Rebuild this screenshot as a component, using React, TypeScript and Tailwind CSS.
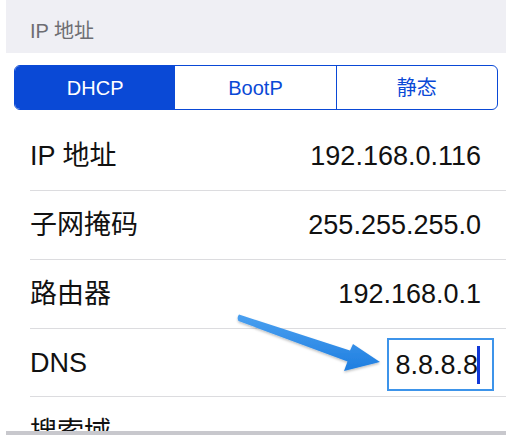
import React from "react";

const font = { fontFamily: '"Liberation Sans", Arial, "Noto Sans CJK SC", sans-serif' };

function Row({ label, value }: { label: string; value: string }) {
  return (
    <div className="ml-[24px] h-[69px] border-b border-[#dcdcdf] flex items-center justify-between pr-[25px]">
      <span className="text-[27px] text-[#111] leading-[30px]">{label}</span>
      <span className="text-[27px] text-[#111] leading-[30px]">{value}</span>
    </div>
  );
}

export default function App() {
  return (
    <div className="w-[519px] h-[436px] overflow-hidden bg-white relative" style={font}>
      <div className="ml-[6px] w-[500px] flex flex-col">
        <div className="h-[53px] bg-[#efeff4] pl-[24px] pt-[19px]">
          <span className="text-[20px] leading-[24px] text-[#6d6d72]">IP 地址</span>
        </div>
        <div className="mt-[12px] mx-[8px] h-[45px] border-[1.5px] border-[#0a49d6] rounded-[6px] flex overflow-hidden">
          <div className="flex-1 bg-[#0a49d6] text-white text-[20px] flex items-center justify-center">DHCP</div>
          <div className="flex-1 text-[#0a49d6] text-[20px] flex items-center justify-center">BootP</div>
          <div className="flex-1 border-l-[1.5px] border-[#0a49d6] text-[#0a49d6] text-[20px] flex items-center justify-center">静态</div>
        </div>
        <div className="mt-[12px]">
          <Row label="IP 地址" value="192.168.0.116" />
          <Row label="子网掩码" value="255.255.255.0" />
          <Row label="路由器" value="192.168.0.1" />
          <div className="ml-[24px] h-[68px] border-b border-[#dcdcdf] flex items-center justify-between pr-[12px]">
            <span className="text-[27px] text-[#111] leading-[30px]">DNS</span>
            <div className="w-[107px] h-[53px] mt-[4px] border-2 border-[#3d94ea] flex items-center justify-end pr-[12px]">
              <span className="text-[27px] text-[#111] leading-[30px]">8.8.8.8</span>
              <span className="w-[3px] h-[38px] bg-[#1238d8] ml-[-1px]" />
            </div>
          </div>
          <div className="ml-[24px] h-[34px] overflow-hidden pt-[20px]">
            <span className="text-[27px] text-[#111] leading-[30px]">搜索域</span>
          </div>
        </div>
        <div className="h-[4px] bg-[#c8c8cd]" />
      </div>
      <svg className="absolute left-0 top-0 pointer-events-none" width="519" height="436" viewBox="0 0 519 436">
        <defs>
          <linearGradient id="ag" x1="0" y1="0" x2="0" y2="1">
            <stop offset="0" stopColor="#4aa0f0" />
            <stop offset="1" stopColor="#1f7ee0" />
          </linearGradient>
          <filter id="sh" x="-10%" y="-20%" width="120%" height="150%">
            <feDropShadow dx="0" dy="1.5" stdDeviation="1.2" floodColor="#000" floodOpacity="0.25" />
          </filter>
        </defs>
        <path
          d="M239 314.5 Q236.5 317.5 238.5 321 L347.5 361.5 L344 371 L380 362 L353 344 L350 350.5 Z"
          fill="url(#ag)"
          filter="url(#sh)"
        />
      </svg>
    </div>
  );
}
